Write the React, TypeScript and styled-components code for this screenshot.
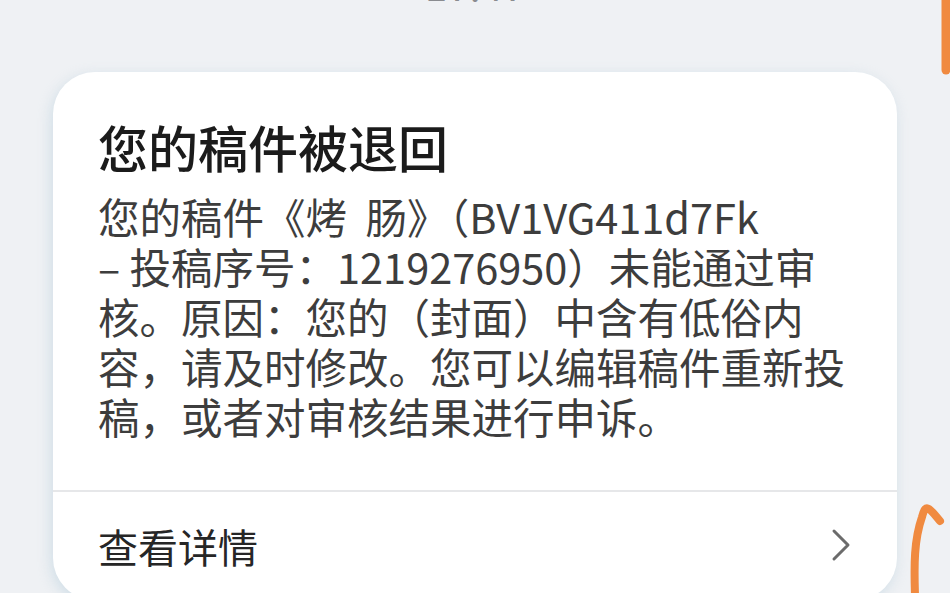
import React from 'react';
import styled, { createGlobalStyle } from 'styled-components';

const GlobalStyle = createGlobalStyle`
  html, body {
    margin: 0;
    padding: 0;
    background: #eff1f4;
    overflow: hidden;
  }
  body {
    font-family: "Noto Sans CJK SC", "Noto Sans", sans-serif;
  }
`;

const Screen = styled.div`
  position: relative;
  display: flex;
  flex-direction: column;
  width: 950px;
  height: 593px;
  overflow: hidden;
  background: #eff1f4;
`;

const TimeLabel = styled.div`
  margin-top: -38px;
  height: 44px;
  flex-shrink: 0;
  text-align: center;
  font-size: 40px;
  line-height: 44px;
  color: #8a8c90;
`;

const Card = styled.div`
  flex-shrink: 0;
  margin: 66px 0 0 53px;
  width: 844px;
  background: #ffffff;
  border-radius: 42px;
  box-shadow: -2px 4px 14px rgba(170, 200, 215, 0.45);
`;

const Content = styled.div`
  padding: 41px 45px 49px 45px;
`;

const Title = styled.h1`
  margin: 0 0 12px 0;
  font-size: 50px;
  font-weight: 500;
  line-height: 66px;
  color: #1b1b1b;
`;

const Body = styled.p`
  margin: 0;
  font-size: 41.5px;
  line-height: 50px;
  color: #3d3d3d;
  white-space: pre;
`;

const Divider = styled.div`
  height: 2px;
  background: #e6e7e9;
`;

const DetailRow = styled.div`
  display: flex;
  align-items: center;
  justify-content: space-between;
  height: 108px;
  padding: 0 44px 0 45px;
  font-size: 40px;
  color: #262626;
`;

const Chevron = styled.svg`
  width: 24px;
  height: 34px;
  margin-bottom: 2px;
`;

const Marker = styled.svg`
  position: absolute;
  pointer-events: none;
`;

const lines = [
  '您的稿件《烤  肠》（BV1VG411d7Fk',
  '– 投稿序号：1219276950）未能通过审',
  '核。原因：您的（封面）中含有低俗内',
  '容，请及时修改。您可以编辑稿件重新投',
  '稿，或者对审核结果进行申诉。',
];

const App: React.FC = () => {
  return (
    <>
      <GlobalStyle />
      <Screen>
        <TimeLabel>17:47</TimeLabel>
        <Card>
          <Content>
            <Title>您的稿件被退回</Title>
            <Body>
              {lines.map((l, i) => (
                <React.Fragment key={i}>
                  {l}
                  {i < lines.length - 1 && <br />}
                </React.Fragment>
              ))}
            </Body>
          </Content>
          <Divider />
          <DetailRow>
            <span>查看详情</span>
            <Chevron viewBox="0 0 24 34">
              <path d="M5 3 L19 17 L5 31" fill="none" stroke="#6b6b6b" strokeWidth="3" strokeLinecap="round" strokeLinejoin="round" />
            </Chevron>
          </DetailRow>
        </Card>
        <Marker style={{ left: 936, top: 0 }} width={14} height={80} viewBox="0 0 14 80">
          <path d="M10 -5 L10 70" stroke="#f08a40" strokeWidth="9" strokeLinecap="round" fill="none" />
        </Marker>
        <Marker style={{ left: 900, top: 495 }} width={50} height={98} viewBox="0 0 50 98">
          <path d="M15 100 C14 70 14 45 22 22 C24 14 26 12 29 14 C32 16 35 20 40 26" stroke="#f08a40" strokeWidth="8" strokeLinecap="round" strokeLinejoin="round" fill="none" />
        </Marker>
      </Screen>
    </>
  );
};

export default App;
